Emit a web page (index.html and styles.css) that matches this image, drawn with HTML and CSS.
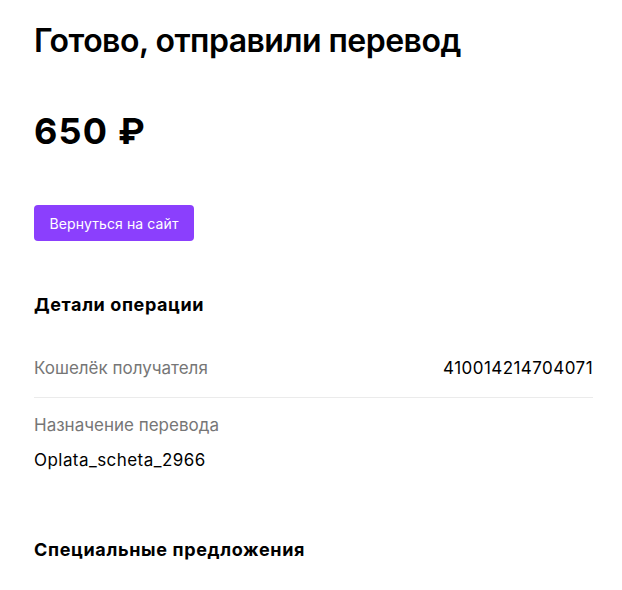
FILE: index.html
```html
<!DOCTYPE html>
<html lang="ru">
<head>
<meta charset="utf-8">
<link rel="stylesheet" href="styles.css">
</head>
<body>
<main class="page">
  <h1 class="title">Готово, отправили перевод</h1>
  <div class="amount">650 ₽</div>
  <a class="btn" href="#">Вернуться на сайт</a>
  <h2 class="section">Детали операции</h2>
  <div class="row row-split">
    <span class="label">Кошелёк получателя</span>
    <span class="value">410014214704071</span>
  </div>
  <div class="row row-stack">
    <span class="label">Назначение перевода</span>
    <span class="value">Oplata_scheta_2966</span>
  </div>
  <h2 class="section offers">Специальные предложения</h2>
</main>
</body>
</html>
```

FILE: styles.css
```css
html, body {
  margin: 0;
  padding: 0;
  background: #fff;
}
body {
  font-family: Inter, "Noto Sans", sans-serif;
  color: #000;
}
.page {
  width: 559px;
  padding: 21px 0 0 34px;
  display: flex;
  flex-direction: column;
  align-items: flex-start;
}
.title {
  margin: 0;
  font-size: 32px;
  line-height: 40px;
  font-weight: 600;
  letter-spacing: -0.52px;
}
.amount {
  margin-top: 48px;
  font-size: 36px;
  line-height: 44px;
  font-weight: 700;
  letter-spacing: 1.2px;
}
.btn {
  margin-top: 52px;
  width: 160px;
  height: 36px;
  box-sizing: border-box;
  display: flex;
  align-items: center;
  justify-content: center;
  background: #8b3ffd;
  color: #fff;
  border-radius: 4px;
  font-size: 14px;
  letter-spacing: 0.1px;
  text-decoration: none;
}
.section {
  margin: 52px 0 0;
  font-size: 18px;
  line-height: 24px;
  font-weight: 700;
  letter-spacing: 0.6px;
}
.row {
  align-self: stretch;
  font-size: 17px;
  line-height: 24px;
}
.row-split {
  margin-top: 39px;
  padding-bottom: 17px;
  border-bottom: 1px solid #ebebeb;
  display: flex;
  justify-content: space-between;
}
.row-stack {
  padding-top: 15px;
  display: flex;
  flex-direction: column;
  gap: 11px;
}
.label {
  color: #767676;
}
.value {
  color: #000;
  letter-spacing: 0.45px;
}
.offers {
  margin-top: 66px;
  letter-spacing: 0.65px;
}
```
